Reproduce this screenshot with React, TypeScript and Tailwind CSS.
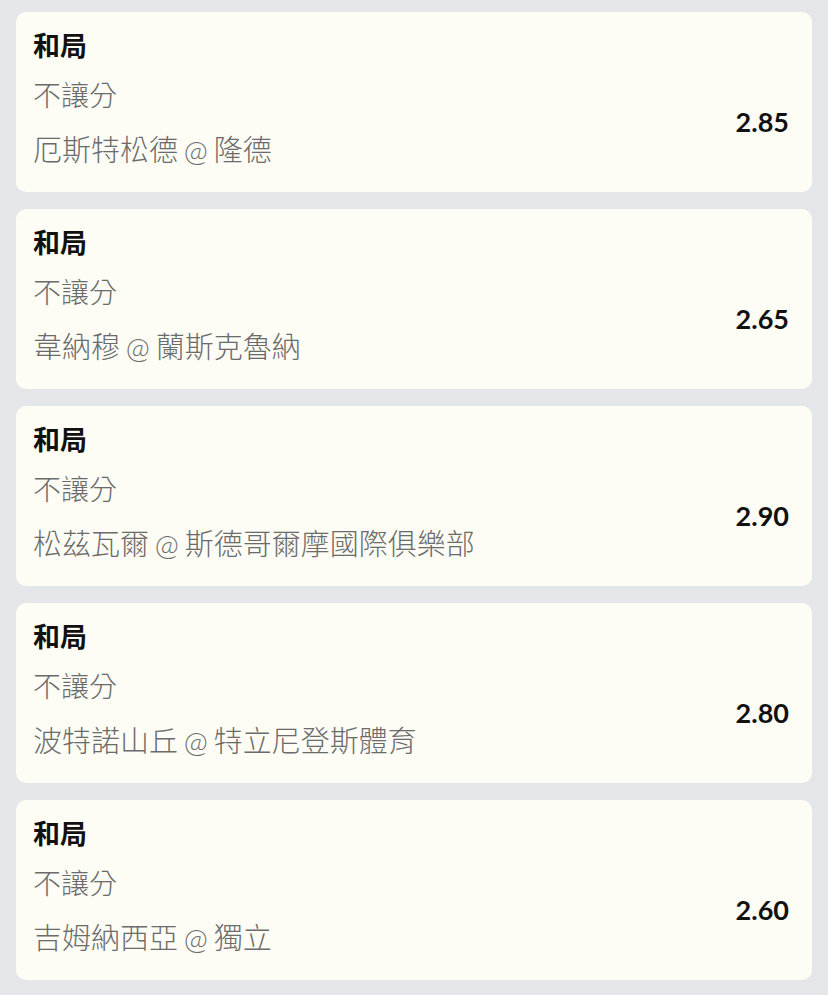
const bets = [
  { market: "和局", line: "不讓分", match: "厄斯特松德 @ 隆德", odds: "2.85" },
  { market: "和局", line: "不讓分", match: "韋納穆 @ 蘭斯克魯納", odds: "2.65" },
  { market: "和局", line: "不讓分", match: "松茲瓦爾 @ 斯德哥爾摩國際俱樂部", odds: "2.90" },
  { market: "和局", line: "不讓分", match: "波特諾山丘 @ 特立尼登斯體育", odds: "2.80" },
  { market: "和局", line: "不讓分", match: "吉姆納西亞 @ 獨立", odds: "2.60" },
];

export default function App() {
  return (
    <div
      className="min-h-screen bg-[#e5e6ea] px-4 pt-3 pb-4"
      style={{ fontFamily: 'Lato, "Noto Sans CJK TC", sans-serif' }}
    >
      <div className="flex flex-col gap-[17px]">
        {bets.map((bet, i) => (
          <div
            key={i}
            className="h-[180px] rounded-[10px] bg-[#fdfdf5] pl-[17px] pr-[23px] pt-[17px] pb-[23px]"
          >
            <div className="h-[34px] text-[27px] leading-[34px] font-bold text-[#111111]">
              {bet.market}
            </div>
            <div className="mt-[13px] flex items-center justify-between">
              <div className="leading-[38px] font-light text-[#6b6b6b]">
                <div className="text-[28px]">{bet.line}</div>
                <div className="mt-[17px] text-[29px] [word-spacing:-2px]">{bet.match}</div>
              </div>
              <div className="text-[27px] font-bold text-[#111111]">{bet.odds}</div>
            </div>
          </div>
        ))}
      </div>
    </div>
  );
}
